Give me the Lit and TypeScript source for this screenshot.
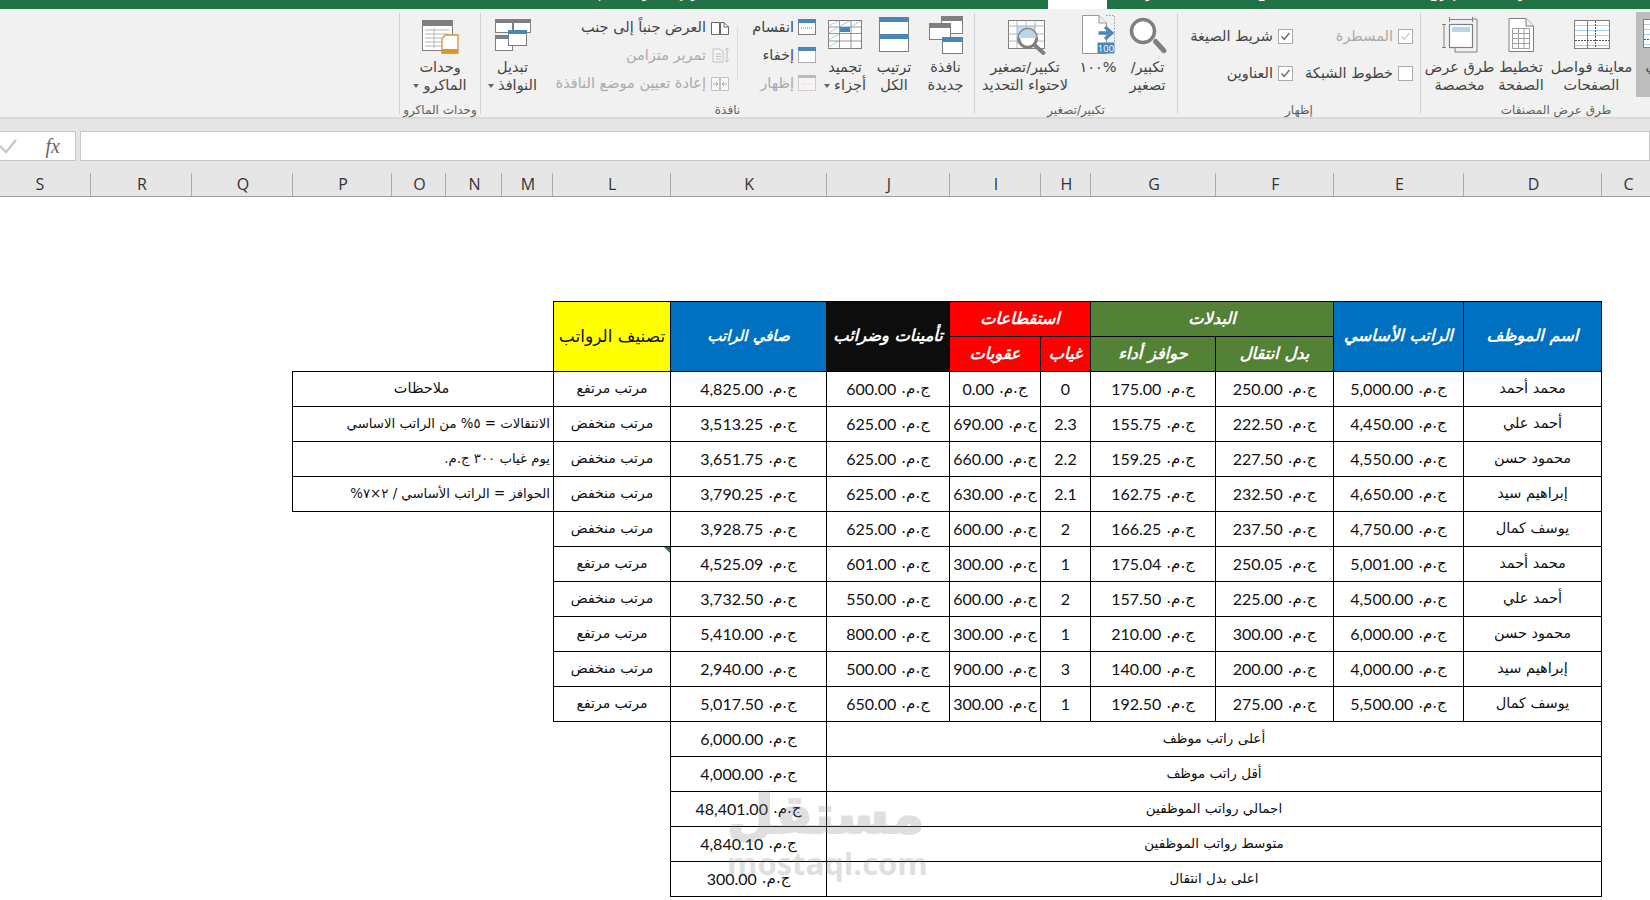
import { LitElement, html, css, svg } from "lit";
import { customElement } from "lit/decorators.js";

const G = "#7f7f7f";
const B = "#4a86b8";

const icons: Record<string, unknown> = {
  pagebreak: svg`<rect x="2.5" y="7.5" width="35" height="28" fill="#fff" stroke="${G}"/>
    <path d="M3 12.5H37M3 17.5H37M3 22.5H37M3 32.5H37" stroke="#a6d0e8"/>
    <path d="M15.5 8V35" stroke="${G}"/><path d="M23.5 8V35M3 27.5H37" stroke="#555" stroke-dasharray="2 1"/>`,
  layout: svg`<path d="M8 5.5H25L32.5 13V38.5H8Z" fill="#fff" stroke="${G}"/><path d="M25 5.5V13H32.5" fill="#eee" stroke="${G}"/>
    <path d="M11.5 15.5H28.5V35.5H11.5ZM11.5 20.5H28.5M11.5 25.5H28.5M11.5 30.5H28.5M17.5 15.5V35.5M23 15.5V35.5" fill="none" stroke="#a0a0a0"/>`,
  custom: svg`<path d="M32 6H37V39H15V34" fill="none" stroke="${G}"/>
    <rect x="9.5" y="11.5" width="23" height="23" fill="#fff" stroke="${G}" stroke-width="1.2"/>
    <rect x="12" y="14" width="18" height="5" fill="#b8d4e8"/>
    <path d="M9.5 4V9M9.5 6.5H32.5M32.5 4V9M2 11.5H6M4 11.5V34.5M2 34.5H6" fill="none" stroke="${G}"/>`,
  zoom: svg`<circle cx="15" cy="18" r="11.5" fill="#fff" stroke="${G}" stroke-width="3.5"/>
    <path d="M27.5 28.5L36 37.7" stroke="${G}" stroke-width="5" stroke-linecap="round"/>`,
  z100: svg`<path d="M28 2.5H36.5V29M28.5 40.5H4.5V36" fill="none" stroke="#999" stroke-dasharray="1.5 1.5"/>
    <path d="M4.5 2.5H21L28.5 10V40.5H4.5Z" fill="#fff" stroke="#999"/><path d="M21 2.5V10H28.5" fill="#eee" stroke="#999"/>
    <path d="M20.5 20H31" stroke="${B}" stroke-width="3.5"/><path d="M27 14L34 20L27 26" fill="none" stroke="${B}" stroke-width="3"/>
    <rect x="19.5" y="29.5" width="17" height="11" fill="${B}"/>
    <text x="28" y="38.5" text-anchor="middle" fill="#fff" font-size="9.5" font-family="Open Sans">100</text>`,
  fit: svg`<rect x="3.5" y="7.5" width="36" height="28" fill="#fff" stroke="${G}"/>
    <rect x="12" y="13" width="18" height="18" fill="#c9dfec"/>
    <path d="M3.5 13H39M3.5 21H39M3.5 28H39M12 7.5V35M21 7.5V35M30 7.5V35" stroke="#b4b4b4"/>
    <circle cx="22.6" cy="25.3" r="9" fill="#fff" stroke="${G}" stroke-width="3"/>
    <path d="M13.6 25A9 9 0 0 1 31.6 25Z" fill="#b9d6e6"/>
    <path d="M29.5 32L38.5 40" stroke="${G}" stroke-width="4" stroke-linecap="round"/>`,
  newwin: svg`<rect x="15.5" y="3.5" width="21" height="17" fill="#fff" stroke="${G}"/><rect x="15" y="3" width="22" height="5" fill="${G}"/>
    <rect x="3.5" y="10.5" width="21" height="16" fill="#fff" stroke="${G}"/><rect x="3" y="10" width="22" height="5" fill="${G}"/>
    <rect x="16.5" y="24.5" width="20" height="16" fill="#fff" stroke="${G}"/><rect x="16" y="24" width="21" height="5" fill="${B}"/>`,
  arrange: svg`<rect x="5.5" y="4.5" width="29" height="34" fill="#fff" stroke="${G}"/>
    <rect x="5" y="4" width="30" height="5" fill="${B}"/><rect x="5" y="21" width="30" height="5" fill="${B}"/>`,
  freeze: svg`<rect x="3.5" y="7.5" width="33" height="28" fill="#fff" stroke="${G}"/>
    <path d="M3.5 14H36M3.5 20.5H36M3.5 28H36M14.5 7.5V35M26 7.5V35" stroke="${G}" stroke-width=".8"/>
    <path d="M3.5 13L13 8M3.5 20L14 14M3.5 27L14 21M3.5 34L14 28M15 13L25 8M27 13L36 8" stroke="#a9cde0"/>
    <rect x="15" y="14" width="10" height="5" fill="${B}"/>`,
  switchwin: svg`<rect x="2.5" y="6.5" width="17" height="13" fill="#fff" stroke="${G}"/><rect x="2" y="6" width="18" height="4" fill="${G}"/>
    <rect x="20.5" y="6.5" width="17" height="13" fill="#fff" stroke="${G}"/><rect x="20" y="6" width="18" height="4" fill="${G}"/>
    <rect x="2.5" y="22.5" width="17" height="15" fill="#fff" stroke="${G}"/><rect x="2" y="22" width="18" height="4" fill="${G}"/>
    <rect x="15.5" y="17.5" width="18" height="15" fill="#fff" stroke="${G}"/><rect x="15" y="17" width="19" height="4" fill="${B}"/>`,
  macro: svg`<rect x="2.5" y="7.5" width="30" height="30" fill="#fff" stroke="${G}"/><rect x="2" y="7" width="31" height="6" fill="${G}"/>
    <path d="M5 17H29M5 21H29M5 25H22M5 29H22M5 33H22M14 15V35" stroke="#b5b5b5"/>
    <path d="M25 22H38V40H22V26Z" fill="#fff" stroke="#e0912f" stroke-width="1.3"/><rect x="22" y="36" width="16" height="4.5" fill="#e0912f"/>`,
  split: svg`<rect x=".5" y=".5" width="17" height="15" fill="#fff" stroke="${G}"/><rect width="18" height="4" fill="${B}"/><path d="M3 9H15" stroke="${B}" stroke-dasharray="1 1"/>`,
  hide: svg`<rect x=".5" y=".5" width="17" height="15" fill="#fff" stroke="#666" stroke-dasharray="1 1"/><rect width="18" height="4" fill="${B}"/>`,
  unhide: svg`<rect x=".5" y=".5" width="17" height="15" fill="#f7f2f5" stroke="#ccc"/><rect width="18" height="3" fill="#bbb"/><path d="M4 9H14" stroke="#e8c6dc" stroke-dasharray="1 2"/>`,
  side: svg`<path d="M1.5 3.5H9.5V15.5H1.5ZM10.5 3.5H14L18.5 8V15.5H10.5Z" fill="#fff" stroke="#666"/><path d="M14 3.5V8H18.5" fill="none" stroke="#666"/>`,
  sync: svg`<path d="M3 2H10L13 5V15H3ZM6 7H11M6 9.5H11M6 12H11" fill="#f4f4f4" stroke="#c2c2c2"/><path d="M17 1V15M15 3L17 1L19 3M15 13L17 15L19 13" fill="none" stroke="#c2c2c2"/>`,
  reset: svg`<path d="M1.5 2.5H9.5V15.5H1.5ZM10.5 2.5H18.5V15.5H10.5Z" fill="#f7f7f7" stroke="#c2c2c2"/><path d="M3 9H8M6 7L8 9L6 11M17 9H12M14 7L12 9L14 11" fill="none" stroke="#aaa"/>`,
};

const cur = (v: string) => html`<span class="cur">ج.م.</span> <span class="num">${v}</span>`;

const rows: string[][] = [
  ["محمد أحمد", "5,000.00", "250.00", "175.00", "0", "0.00", "600.00", "4,825.00", "مرتب مرتفع", "ملاحظات"],
  ["أحمد علي", "4,450.00", "222.50", "155.75", "2.3", "690.00", "625.00", "3,513.25", "مرتب منخفض", "الانتقالات = ٥% من الراتب الاساسي"],
  ["محمود حسن", "4,550.00", "227.50", "159.25", "2.2", "660.00", "625.00", "3,651.75", "مرتب منخفض", "يوم غياب ٣٠٠ ج.م."],
  ["إبراهيم سيد", "4,650.00", "232.50", "162.75", "2.1", "630.00", "625.00", "3,790.25", "مرتب منخفض", "الحوافز = الراتب الأساسي / ٢×٧%"],
  ["يوسف كمال", "4,750.00", "237.50", "166.25", "2", "600.00", "625.00", "3,928.75", "مرتب منخفض", ""],
  ["محمد أحمد", "5,001.00", "250.05", "175.04", "1", "300.00", "601.00", "4,525.09", "مرتب مرتفع", ""],
  ["أحمد علي", "4,500.00", "225.00", "157.50", "2", "600.00", "550.00", "3,732.50", "مرتب منخفض", ""],
  ["محمود حسن", "6,000.00", "300.00", "210.00", "1", "300.00", "800.00", "5,410.00", "مرتب مرتفع", ""],
  ["إبراهيم سيد", "4,000.00", "200.00", "140.00", "3", "900.00", "500.00", "2,940.00", "مرتب منخفض", ""],
  ["يوسف كمال", "5,500.00", "275.00", "192.50", "1", "300.00", "650.00", "5,017.50", "مرتب مرتفع", ""],
];

const summary = [
  ["أعلى راتب موظف", "6,000.00"],
  ["أقل راتب موظف", "4,000.00"],
  ["اجمالي رواتب الموظفين", "48,401.00"],
  ["متوسط رواتب الموظفين", "4,840.10"],
  ["اعلى بدل انتقال", "300.00"],
];

const letters = ["S", "R", "Q", "P", "O", "N", "M", "L", "K", "J", "I", "H", "G", "F", "E", "D", "C"];

@customElement("app-root")
export class AppRoot extends LitElement {
  static styles = css`
    :host { display: block; width: 1650px; height: 900px; overflow: hidden; position: relative; background: #fff;
      font-family: "DejaVu Sans", sans-serif; color: #111; }
    .titlebar { height: 9px; background: #217346; overflow: hidden; display: flex; direction: rtl; }
    .titlebar span { color: #fff; font-size: 13px; line-height: 18px; margin-top: -15px; padding: 0 14px; white-space: nowrap; }
    .titlebar .active { width: 59px; box-sizing: border-box; margin-top: 0; height: 9px; background: #fff; padding: 0; flex: none; }
    .titlebar .tabs { display: flex; width: 543px; flex: none; justify-content: space-between; }
    .titlebar .tell { margin-right: 320px; }
    .ribbon { width: 1686px; height: 110px; background: #f1f1f1; border-bottom: 2px solid #d9d9d9; box-sizing: border-box; display: flex; direction: rtl; }
    .group { margin-top: 4px; height: 101px; border-left: 1px solid #d2d2d2; box-sizing: border-box; display: flex; flex-direction: column; flex: none; }
    .group.view { width: 266px; }
    .group.zoom { width: 203px; }
    .group.show { width: 243px; }
    .group.win { width: 494px; }
    .group.mac { width: 81px; }
    .top { height: 88px; display: flex; flex: none; }
    .glabel { font-size: 12px; line-height: 18px; color: #5f5f5f; text-align: center; white-space: nowrap; }
    .view .glabel { padding-left: 5px; }
    .btn { flex: none; display: flex; flex-direction: column; align-items: center; font-size: 14.5px; line-height: 18px; color: #444; white-space: nowrap; }
    .btn svg { width: 40px; height: 42px; margin-bottom: 3px; overflow: visible; flex: none; }
    .gray { width: 50px; height: 85px; background: #bdbdbd; margin-top: -1px; }
    .w89 { width: 89px; } .w52 { width: 52px; } .w71 { width: 71px; } .w59 { width: 59px; } .w40 { width: 40px; }
    .w104 { width: 106px; margin-left: -2px; } .w57 { width: 57px; } .w46 { width: 46px; } .w80 { width: 80px; }
    .caret { display: inline-block; border: 3px solid transparent; border-top: 4px solid #666; border-bottom: 0; margin-right: 4px; vertical-align: middle; }
    .checks { display: flex; flex-direction: column; gap: 21px; padding-top: 15px; flex: none; box-sizing: border-box; }
    .c1 { width: 120px; margin-right: 7px; }
    .chk { display: flex; align-items: center; gap: 5px; height: 16px; font-size: 14.5px; color: #444; white-space: nowrap; }
    .chk.dis { color: #aaa; }
    .box { width: 15px; height: 15px; flex: none; background: #fff; border: 1px solid #ababab; box-sizing: border-box; display: block; }
    .small { display: flex; flex-direction: column; gap: 10px; padding-top: 5px; flex: none; box-sizing: border-box; }
    .s1 { width: 81px; padding-right: 3px; }
    .s2 { width: 192px; padding-right: 7px; border-right: 1px solid #dcdcdc; height: 54px; margin-top: 14px; padding-top: 0; overflow: visible; }
    .s2inner { display: flex; flex-direction: column; gap: 10px; margin-top: -9px; }
    .srow { display: flex; align-items: center; gap: 4px; height: 18px; font-size: 14.5px; color: #444; white-space: nowrap; }
    .srow svg { width: 18px; height: 16px; flex: none; }
    .srow.wide svg { width: 20px; }
    .srow.dis { color: #aaa; }
    .sp4 { width: 4px; flex: none; }
    .fbar { height: 54px; background: #e6e6e6; box-sizing: border-box; padding-top: 12px; display: flex; gap: 4px; }
    .fleft { width: 76px; height: 30px; background: #fff; border: 1px solid #c6c6c6; border-left: 0; box-sizing: border-box; display: flex; align-items: center; justify-content: space-between; padding: 0 15px 0 0; }
    .fleft svg { width: 18px; height: 16px; }
    .fx { font: italic 20px "Liberation Serif", serif; color: #666; }
    .finput { flex: 1; height: 30px; background: #fff; border: 1px solid #c6c6c6; box-sizing: border-box; }
    .cols { height: 24px; background: #e6e6e6; border-bottom: 1px solid #9f9f9f; box-sizing: border-box; display: grid;
      grid-template-columns: 91px 101px 101px 99px 54px 56px 51px 117.5px 156.5px 123px 91px 50px 125px 118px 130px 138px 48px; }
    .cols div { text-align: center; font: 16px/23px "Open Sans", sans-serif; color: #333; border-right: 1px solid #ababab; padding-left: 2px; }
    .cols div:first-child { padding: 0 10px 0 0; }
    .cols div:last-child { padding-left: 5px; border-right: 0; }
    .sheet { padding: 104px 0 0 292px; }
    .grid { display: grid; direction: rtl; width: 1310px;
      grid-template-columns: 139px 130px 118px 125px 50px 91px 123px 156px 117px 261px;
      grid-template-rows: 36px repeat(16, 35px); }
    .c { box-sizing: border-box; border-left: 1px solid #000; border-bottom: 1px solid #000; display: flex; align-items: center; justify-content: center;
      font-size: 13.5px; padding-bottom: 2px; white-space: nowrap; position: relative; min-width: 0; }
    .first { border-right: 1px solid #000; }
    .top1 { border-top: 1px solid #000; }
    .name { font-size: 14.5px; }
    .cls { font-size: 14px; }
    .num { font: 16px "Lato", sans-serif; color: #111; }
    .cur { font-size: 15px; }
    .money { gap: 5px; }
    .th { color: #fff; font-weight: 700; font-style: italic; font-size: 16.3px; }
    .th.net { font-size: 15px; }
    .blue { background: #0070c0; } .green { background: #538135; } .red { background: #ff0000; } .black { background: #0d0d0d; }
    .th.yellow { background: #ffff00; color: #111; font-style: normal; font-size: 17px; font-weight: 400; }
    .r2 { grid-row: span 2; } .s2c { grid-column: span 2; } .s7 { grid-column: span 7; }
    .blank { border-left: 0; }
    .note { justify-content: flex-start; padding-right: 3px; font-size: 13.3px; }
    .note.center { justify-content: center; font-size: 14.5px; }
    .empty { border: 0; }
    .tri { position: absolute; top: 0; right: 0; width: 0; height: 0; border-top: 6px solid #217346; border-left: 6px solid transparent; }
    .wm { position: absolute; left: 727px; top: 780px; width: 196px; text-align: center; color: #828282; opacity: .25; pointer-events: none; font-weight: 700; }
    .wm1 { font-size: 54px; line-height: 70px; white-space: nowrap; -webkit-text-stroke: 2px #828282; }
    .wm2 { font: 700 31px/26px "Open Sans", sans-serif; white-space: nowrap; }
  `;

  private big(icon: string, l1: unknown, l2: string, w: string, caret = false) {
    return html`<div class="btn ${w}">
      <svg viewBox="0 0 40 42">${icons[icon]}</svg>
      <span>${l1}</span>
      ${l2 ? html`<span>${l2}${caret ? html`<i class="caret"></i>` : ""}</span>` : ""}
    </div>`;
  }

  private chk(label: string, on: boolean, dis = false) {
    return html`<div class="chk ${dis ? "dis" : ""}">
      <svg class="box" viewBox="0 0 15 15">${on ? svg`<path d="M3 7.5L6 11L12 3.5" fill="none" stroke="${dis ? "#ccc" : "#666"}" stroke-width="1.6"/>` : ""}</svg>
      <span>${label}</span></div>`;
  }

  private srow(icon: string, label: string, dis = false, wide = false) {
    return html`<div class="srow ${dis ? "dis" : ""} ${wide ? "wide" : ""}">
      <svg viewBox="0 0 ${wide ? 20 : 18} 16">${icons[icon]}</svg><span>${label}</span></div>`;
  }

  render() {
    return html`
      <div class="titlebar" dir="rtl">
        <div class="tabs"><span>ملف</span><span>الصفحة الرئيسية</span><span>إدراج</span><span>تخطيط الصفحة</span><span>صيغ</span><span>بيانات</span><span>مراجعة</span></div>
        <span class="active"></span>
        <span class="tell">أخبرني بما تريد القيام به</span>
      </div>
      <div class="ribbon">
        <div class="group view">
          <div class="top">
            <div class="btn gray"><svg viewBox="0 0 40 42">${icons.pagebreak}</svg><span>عادي</span></div>
            ${this.big("pagebreak", "معاينة فواصل", "الصفحات", "w89")}
            ${this.big("layout", "تخطيط", "الصفحة", "w52")}
            ${this.big("custom", "طرق عرض", "مخصصة", "w71")}
          </div>
          <div class="glabel">طرق عرض المصنفات</div>
        </div>
        <div class="group show">
          <div class="top">
            <div class="checks c1">${this.chk("المسطرة", true, true)}${this.chk("خطوط الشبكة", false)}</div>
            <div class="checks">${this.chk("شريط الصيغة", true)}${this.chk("العناوين", true)}</div>
          </div>
          <div class="glabel">إظهار</div>
        </div>
        <div class="group zoom">
          <div class="top">
            ${this.big("zoom", "تكبير/", "تصغير", "w59")}
            ${this.big("z100", html`<bdo dir="ltr">١٠٠%</bdo>`, "", "w40")}
            ${this.big("fit", "تكبير/تصغير", "لاحتواء التحديد", "w104")}
          </div>
          <div class="glabel">تكبير/تصغير</div>
        </div>
        <div class="group win">
          <div class="top">
            ${this.big("newwin", "نافذة", "جديدة", "w57")}
            ${this.big("arrange", "ترتيب", "الكل", "w46")}
            ${this.big("freeze", "تجميد", "أجزاء", "w52", true)}
            <div class="small s1">
              ${this.srow("split", "انقسام")}${this.srow("hide", "إخفاء")}${this.srow("unhide", "إظهار", true)}
            </div>
            <div class="small s2"><div class="s2inner">
              ${this.srow("side", "العرض جنباً إلى جنب", false, true)}
              ${this.srow("sync", "تمرير متزامن", true, true)}
              ${this.srow("reset", "إعادة تعيين موضع النافذة", true, true)}
            </div></div>
            <div class="sp4"></div>
            ${this.big("switchwin", "تبديل", "النوافذ", "w59", true)}
          </div>
          <div class="glabel">نافذة</div>
        </div>
        <div class="group mac">
          <div class="top">${this.big("macro", "وحدات", "الماكرو", "w80", true)}</div>
          <div class="glabel">وحدات الماكرو</div>
        </div>
      </div>
      <div class="fbar">
        <div class="fleft">
          <svg viewBox="0 0 18 16"><path d="M0 8L6 14L16 2" fill="none" stroke="#c8c8c8" stroke-width="2.4"/></svg>
          <span class="fx">fx</span>
        </div>
        <div class="finput"></div>
      </div>
      <div class="cols">${letters.map((l) => html`<div>${l}</div>`)}</div>
      <div class="sheet">
        <div class="grid">
          <div class="c r2 top1 first th blue">اسم الموظف</div>
          <div class="c r2 top1 th blue">الراتب الأساسي</div>
          <div class="c s2c top1 th green">البدلات</div>
          <div class="c s2c top1 th red">استقطاعات</div>
          <div class="c r2 top1 th black">تأمينات وضرائب</div>
          <div class="c r2 top1 th net blue">صافي الراتب</div>
          <div class="c r2 top1 th yellow">تصنيف الرواتب</div>
          <div class="c r2 blank"></div>
          <div class="c th green">بدل انتقال</div>
          <div class="c th green">حوافز أداء</div>
          <div class="c th red">غياب</div>
          <div class="c th red">عقوبات</div>
          ${rows.map((r, i) => html`
            <div class="c first name">${r[0]}</div>
            <div class="c money">${cur(r[1])}</div>
            <div class="c money">${cur(r[2])}</div>
            <div class="c money">${cur(r[3])}</div>
            <div class="c"><span class="num">${r[4]}</span></div>
            <div class="c money">${cur(r[5])}</div>
            <div class="c money">${cur(r[6])}</div>
            <div class="c money">${cur(r[7])}</div>
            <div class="c cls">${r[8]}${i === 5 ? html`<i class="tri"></i>` : ""}</div>
            ${i < 4 ? html`<div class="c note ${i === 0 ? "center" : ""}">${r[9]}</div>` : html`<div class="empty"></div>`}
          `)}
          ${summary.map((s) => html`
            <div class="c s7 first">${s[0]}</div>
            <div class="c money">${cur(s[1])}</div>
            <div class="empty"></div><div class="empty"></div>
          `)}
        </div>
      </div>
      <div class="wm"><div class="wm1">مستقل</div><div class="wm2">mostaql.com</div></div>
    `;
  }
}
